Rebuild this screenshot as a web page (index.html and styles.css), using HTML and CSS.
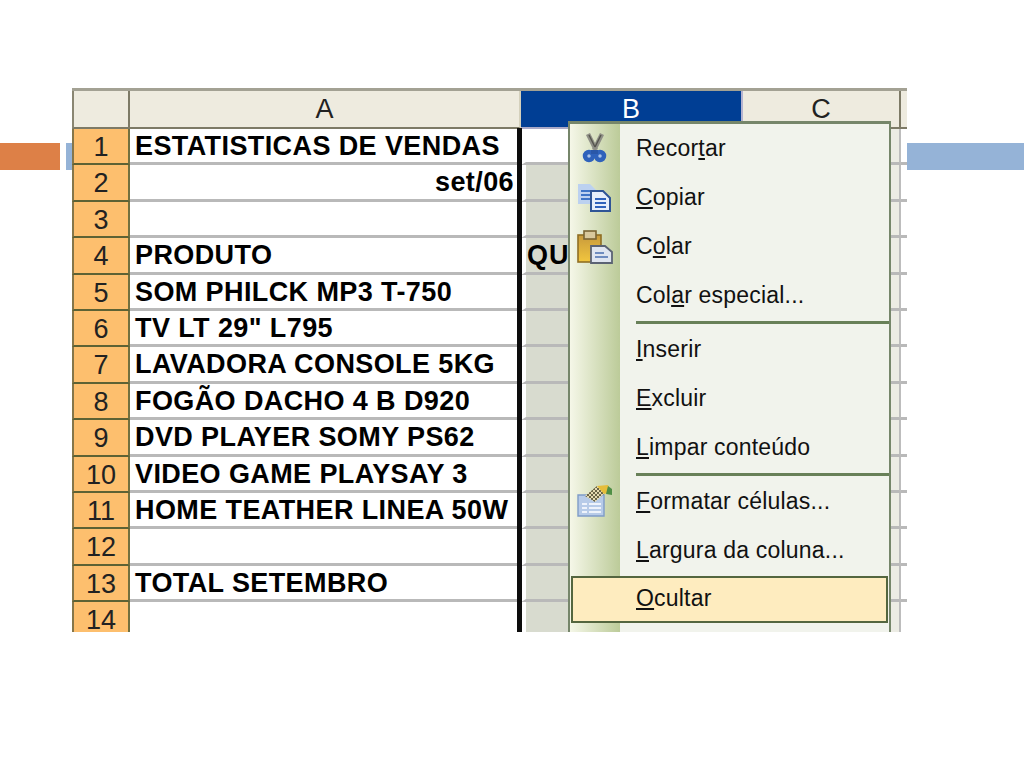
FILE: index.html
```html
<!doctype html>
<html lang="pt">
<head>
	<meta charset="UTF-8">
	<title>Ocultar coluna</title>
	<link rel="stylesheet" href="styles.css">
</head>
<body>
	<div class="slide">
		<div class="deco">
			<span class="deco-orange"></span>
			<span class="deco-blue"></span>
		</div>
		<div class="sheet">
			<div class="corner"></div>
			<div class="colhead">A</div>
			<div class="colhead sel">B</div>
			<div class="colhead">C</div>
			<div class="colrest"></div>

			<div class="rowhead">1</div><div class="cell">ESTATISTICAS DE VENDAS</div><div class="cell b first"></div><div class="cell c"></div><div class="cell d"></div>
			<div class="rowhead">2</div><div class="cell num">set/06</div><div class="cell b"></div><div class="cell c"></div><div class="cell d"></div>
			<div class="rowhead">3</div><div class="cell"></div><div class="cell b"></div><div class="cell c"></div><div class="cell d"></div>
			<div class="rowhead">4</div><div class="cell">PRODUTO</div><div class="cell b">QUANTIDADE</div><div class="cell c"></div><div class="cell d"></div>
			<div class="rowhead">5</div><div class="cell">SOM PHILCK MP3 T-750</div><div class="cell b"></div><div class="cell c"></div><div class="cell d"></div>
			<div class="rowhead">6</div><div class="cell">TV LT 29" L795</div><div class="cell b"></div><div class="cell c"></div><div class="cell d"></div>
			<div class="rowhead">7</div><div class="cell">LAVADORA CONSOLE 5KG</div><div class="cell b"></div><div class="cell c"></div><div class="cell d"></div>
			<div class="rowhead">8</div><div class="cell">FOGÃO DACHO 4 B D920</div><div class="cell b"></div><div class="cell c"></div><div class="cell d"></div>
			<div class="rowhead">9</div><div class="cell">DVD PLAYER SOMY PS62</div><div class="cell b"></div><div class="cell c"></div><div class="cell d"></div>
			<div class="rowhead">10</div><div class="cell">VIDEO GAME PLAYSAY 3</div><div class="cell b"></div><div class="cell c"></div><div class="cell d"></div>
			<div class="rowhead">11</div><div class="cell">HOME TEATHER LINEA 50W</div><div class="cell b"></div><div class="cell c"></div><div class="cell d"></div>
			<div class="rowhead">12</div><div class="cell"></div><div class="cell b"></div><div class="cell c"></div><div class="cell d"></div>
			<div class="rowhead">13</div><div class="cell">TOTAL SETEMBRO</div><div class="cell b"></div><div class="cell c"></div><div class="cell d"></div>
			<div class="rowhead">14</div><div class="cell"></div><div class="cell b"></div><div class="cell c"></div><div class="cell d"></div>

			<div class="selbar"></div>

			<ul class="menu">
				<li class="item">
					<span class="ico"><svg width="36" height="36" viewBox="0 0 36 36"><path d="M11 3 L19 19 M25 3 L17 19" stroke="#8f8f86" stroke-width="4.5" fill="none"/><path d="M12 4 L18 16 M24 4 L18 16" stroke="#55554e" stroke-width="1.4" fill="none"/><circle cx="12" cy="25" r="4" fill="#a9c3ea" stroke="#2f62bb" stroke-width="4.5"/><circle cx="23" cy="25" r="4" fill="#a9c3ea" stroke="#2f62bb" stroke-width="4.5"/><path d="M14 19 H21 V23 H14 Z" fill="#2a57a8"/></svg></span>
					<span class="label">Recor<u>t</u>ar</span>
				</li>
				<li class="item">
					<span class="ico"><svg width="36" height="36" viewBox="0 0 36 36"><path d="M1 4 H13 L19 10 V24 H1 Z" fill="#bcd1f0"/><path d="M4 11 H13 M4 15 H14 M4 19 H14" stroke="#3e74c6" stroke-width="2.2"/><path d="M14 11 H26 L33 18 V31 H14 Z" fill="#e6eefa" stroke="#2f5596" stroke-width="2"/><path d="M18 19 H29 M18 23 H29 M18 27 H29" stroke="#2f62bb" stroke-width="2.2"/></svg></span>
					<span class="label"><u>C</u>opiar</span>
				</li>
				<li class="item">
					<span class="ico"><svg width="36" height="36" viewBox="0 0 36 36"><defs><linearGradient id="board" x1="0" y1="0" x2="0" y2="1"><stop offset="0" stop-color="#c89a3c"/><stop offset="1" stop-color="#f2c63e"/></linearGradient></defs><rect x="1" y="6" width="23" height="27" fill="url(#board)" stroke="#8f6e24" stroke-width="1.6"/><rect x="7" y="2" width="12" height="8" fill="#d8c89c" stroke="#7a6534" stroke-width="1.6"/><path d="M14 17 H28 L35 23 V34 H14 Z" fill="#dfe5f0" stroke="#5b6374" stroke-width="1.8"/><path d="M18 24 H27 M18 28 H31" stroke="#6f8cbf" stroke-width="2.2"/></svg></span>
					<span class="label">C<u>o</u>lar</span>
				</li>
				<li class="item">
					<span class="ico"></span>
					<span class="label">Col<u>a</u>r especial...</span>
				</li>
				<li class="sep"></li>
				<li class="item">
					<span class="ico"></span>
					<span class="label"><u>I</u>nserir</span>
				</li>
				<li class="item">
					<span class="ico"></span>
					<span class="label"><u>E</u>xcluir</span>
				</li>
				<li class="item">
					<span class="ico"></span>
					<span class="label"><u>L</u>impar conteúdo</span>
				</li>
				<li class="sep"></li>
				<li class="item">
					<span class="ico"><svg width="36" height="36" viewBox="0 0 36 36"><defs><pattern id="check" width="4" height="4" patternUnits="userSpaceOnUse"><rect width="4" height="4" fill="#e4d9b0"/><rect width="2" height="2" fill="#6a6446"/><rect x="2" y="2" width="2" height="2" fill="#6a6446"/></pattern></defs><path d="M1 11 H27 V32 H1 Z" fill="#b7cbe8" stroke="#7f9cc8" stroke-width="1.4"/><path d="M5 20 H10 M12 20 H24 M5 24 H10 M12 24 H24 M5 28 H10 M12 28 H24" stroke="#eef3fb" stroke-width="2"/><path d="M8 12 L20 2 L28 9 L18 18 Z" fill="url(#check)"/><path d="M20 2 L31 1 L34 8 L27 10 Z" fill="#e5bd3a"/><path d="M31 2 L35 5 L35 11 L29 10 Z" fill="#4f8f45"/></svg></span>
					<span class="label"><u>F</u>ormatar células...</span>
				</li>
				<li class="item">
					<span class="ico"></span>
					<span class="label"><u>L</u>argura da coluna...</span>
				</li>
				<li class="item hot">
					<span class="ico"></span>
					<span class="label"><u>O</u>cultar</span>
				</li>
			</ul>
		</div>
	</div>
</body>
</html>
```
FILE: styles.css
```css
* { padding: 0; margin: 0; box-sizing: border-box; }
li { list-style: none; }
body { background: #fff; width: 1024px; height: 768px; overflow: hidden; font-family: "Liberation Sans", Arial, sans-serif; }
.slide { position: relative; width: 1024px; height: 768px; padding: 88px 117px 0 72px; }
.deco { position: absolute; top: 143px; left: 0; width: 1024px; height: 27px; display: flex; gap: 6px; }
.deco-orange { width: 60px; background: #dd8047; }
.deco-blue { flex: 1; background: #95b3d7; }

.sheet { position: relative; width: 835px; height: 544px; overflow: hidden; background: #fff; border-top: 3px solid #a3a193;
	display: grid; grid-template-columns: 58px 391px 222px 158px 6px; grid-template-rows: 38px repeat(14, 36.4px); }
.corner, .colhead, .colrest { background: #eeebdf; border-bottom: 2px solid #7d7a66; }
.corner { border-left: 2px solid #8a8672; border-right: 2px solid #7d7a66; }
.colhead { border-right: 2px solid #d4d0bc; text-align: center; font-size: 27px; line-height: 36px; color: #222; }
.colhead:nth-child(4) { border-right-color: #7d7a66; }
.colhead.sel { background: #003e94; color: #fff; border-right-color: #b5b3d0; border-bottom-color: #a9a9c8; }

.rowhead { background: #fdbf6e; border-left: 2px solid #85764a; border-right: 2px solid #72703f; border-bottom: 2px solid #5d6234; text-align: center; font-size: 27px; line-height: 36px; color: #222; }
.cell { background: #fff; border-bottom: 3px solid #b9b9b9; padding-left: 5px; font-size: 27px; line-height: 34px; font-weight: bold; color: #000; white-space: nowrap; overflow: hidden; letter-spacing: 0.4px; }
.cell.num { text-align: right; padding: 0 7px 0 0; }
.cell.b { padding-left: 1px; background: #d8dbcf; border-left: 5px solid #fff; letter-spacing: 1px; }
.cell.b.first { background: #fff; }
.cell.c { background: #ecece4; padding: 0; border-right: 2px solid #bdbdbd; }
.cell.d { padding: 0; }

.selbar { position: absolute; top: 37px; left: 445px; width: 5px; height: 510px; background: #0c0c0c; }

.menu { position: absolute; top: 30px; left: 496px; width: 323px; height: 520px; background: #f1f3ec; border: 2px solid #76866a; border-top-width: 3px; border-bottom: 0; }
.menu::before { content: ""; position: absolute; top: 0; left: 0; bottom: 0; width: 50px; background: linear-gradient(to right, #f5f7e8, #bccb99); }
.item { position: relative; height: 49px; display: flex; align-items: center; font-size: 23px; color: #111; letter-spacing: 0.2px; }
.ico { width: 66px; display: flex; justify-content: center; padding-right: 16px; flex: none; }
.ico svg { filter: blur(0.4px); }
.sep { position: relative; height: 5px; margin-left: 66px; display: flex; align-items: center; }
.sep::after { content: ""; flex: 1; height: 3px; background: #688058; }
.hot { height: 47px; background: #feecbf; border: 2px solid #54663f; margin: 1px 1px 0; padding-bottom: 2px; }
.hot .ico { width: 63px; }
```
